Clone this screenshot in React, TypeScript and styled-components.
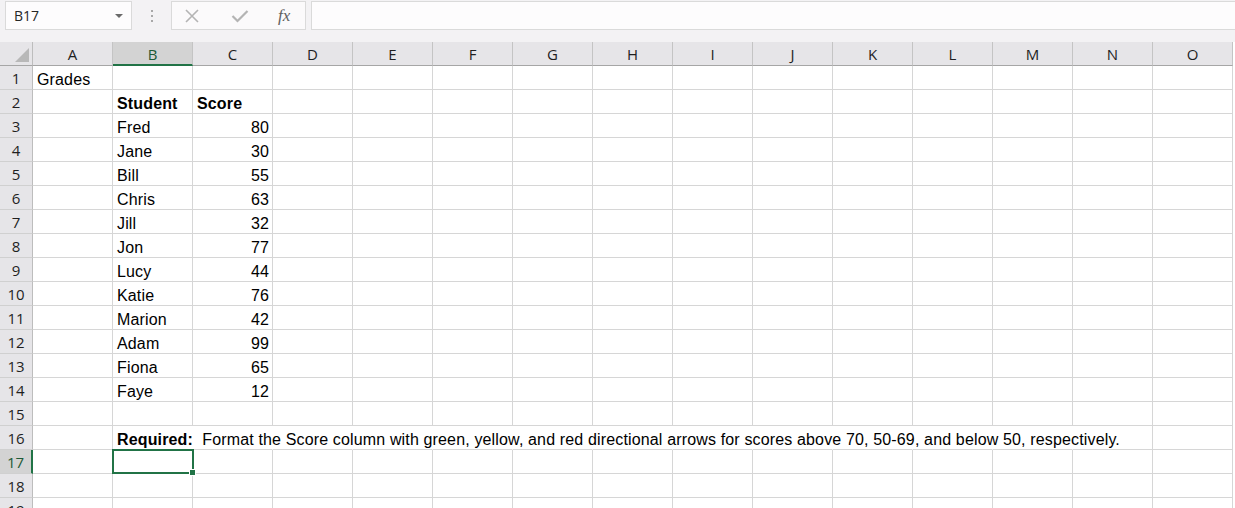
import styled, { createGlobalStyle } from 'styled-components';

const COLUMNS = ['A', 'B', 'C', 'D', 'E', 'F', 'G', 'H', 'I', 'J', 'K', 'L', 'M', 'N', 'O'];
const ROW_COUNT = 19;
const SELECTED_COL = 'B';
const SELECTED_ROW = 17;

const students: [string, number][] = [
  ['Fred', 80],
  ['Jane', 30],
  ['Bill', 55],
  ['Chris', 63],
  ['Jill', 32],
  ['Jon', 77],
  ['Lucy', 44],
  ['Katie', 76],
  ['Marion', 42],
  ['Adam', 99],
  ['Fiona', 65],
  ['Faye', 12],
];

type CellValue = { text: string; bold?: boolean; number?: boolean };

function cellAt(row: number, col: string): CellValue | null {
  if (row === 1 && col === 'A') return { text: 'Grades' };
  if (row === 2 && col === 'B') return { text: 'Student', bold: true };
  if (row === 2 && col === 'C') return { text: 'Score', bold: true };
  const s = students[row - 3];
  if (s && col === 'B') return { text: s[0] };
  if (s && col === 'C') return { text: String(s[1]), number: true };
  return null;
}

export default function App() {
  return (
    <>
      <GlobalStyle />
      <Toolbar>
        <NameBox>
          <span>B17</span>
          <Caret />
        </NameBox>
        <Grip>
          <i />
          <i />
          <i />
        </Grip>
        <ButtonBox>
          <IconSlot>
            <svg width="14" height="14" viewBox="0 0 14 14">
              <path d="M1 1 L13 13 M13 1 L1 13" stroke="#b4b4b4" strokeWidth="1.6" fill="none" />
            </svg>
          </IconSlot>
          <IconSlot>
            <svg width="18" height="14" viewBox="0 0 18 14">
              <path d="M1.5 7 L6.5 12 L16.5 2" stroke="#b4b4b4" strokeWidth="2.2" fill="none" />
            </svg>
          </IconSlot>
          <Fx>fx</Fx>
        </ButtonBox>
        <FormulaBox />
      </Toolbar>

      <Sheet>
        <Corner>
          <svg width="14" height="14" viewBox="0 0 14 14">
            <path d="M14 0 L14 14 L0 14 Z" fill="#b8b8b8" />
          </svg>
        </Corner>
        {COLUMNS.map((c) => (
          <ColHeader key={c} $selected={c === SELECTED_COL}>
            {c}
          </ColHeader>
        ))}

        {Array.from({ length: ROW_COUNT }, (_, i) => i + 1).map((r) => (
          <Row key={r} r={r} />
        ))}
      </Sheet>
    </>
  );
}

function Row({ r }: { r: number }) {
  return (
    <>
      <RowHeader $selected={r === SELECTED_ROW}>{r}</RowHeader>
      {COLUMNS.map((c, ci) => {
        if (r === 16) {
          // the note spills across C..N, so those cells lose their right gridline
          if (c === 'B')
            return (
              <Cell key={c} $spill $noRight>
                <Note>
                  <b>Required:</b>
                  {'  Format the Score column with green, yellow, and red directional arrows for scores above 70, 50-69, and below 50, respectively.'}
                </Note>
              </Cell>
            );
          return <Cell key={c} $noRight={ci >= 1 && ci < 13} />;
        }
        const v = cellAt(r, c);
        const active = r === SELECTED_ROW && c === SELECTED_COL;
        return (
          <Cell key={c} $number={v?.number} $bold={v?.bold} $spill={active}>
            {v?.text}
            {active && (
              <ActiveFrame>
                <Handle />
              </ActiveFrame>
            )}
          </Cell>
        );
      })}
    </>
  );
}

// Styled-components

const GlobalStyle = createGlobalStyle`
  html, body {
    margin: 0;
    padding: 0;
    background: #ffffff;
    overflow: hidden;
  }
  body {
    font-family: "Liberation Sans", Arial, sans-serif;
    color: #000;
  }
`;

const Toolbar = styled.div`
  display: flex;
  align-items: flex-start;
  height: 42px;
  padding: 1px 0 0 5px;
  box-sizing: border-box;
  background: #f3f2f4;
`;

const NameBox = styled.div`
  width: 127px;
  height: 29px;
  box-sizing: border-box;
  border: 1px solid #dadada;
  background: #fdfcfd;
  display: flex;
  align-items: center;
  justify-content: space-between;
  padding: 0 8px 0 8px;
  font-family: "Open Sans", "Liberation Sans", sans-serif;
  font-size: 14px;
  color: #262626;
`;

const Caret = styled.span`
  width: 0;
  height: 0;
  border-left: 4px solid transparent;
  border-right: 4px solid transparent;
  border-top: 4px solid #6a6a6a;
`;

const Grip = styled.div`
  width: 39px;
  height: 29px;
  display: flex;
  flex-direction: column;
  align-items: center;
  justify-content: center;
  gap: 3px;

  i {
    width: 2px;
    height: 2px;
    background: #a8a8a8;
  }
`;

const ButtonBox = styled.div`
  width: 135px;
  height: 29px;
  box-sizing: border-box;
  border: 1px solid #dadada;
  background: #fbfafb;
  display: flex;
  align-items: center;
  padding: 0 6px 0 13px;
  margin-right: 5px;
`;

const IconSlot = styled.span`
  width: 45px;
  display: flex;
  align-items: center;
  justify-content: flex-start;
  &:nth-child(2) {
    padding-left: 1px;
  }
`;

const Fx = styled.span`
  font-family: "Liberation Serif", "Times New Roman", serif;
  font-style: italic;
  font-size: 17px;
  color: #606060;
  margin-left: 2px;
`;

const FormulaBox = styled.div`
  flex: 1;
  height: 29px;
  box-sizing: border-box;
  border: 1px solid #dadada;
  border-right: none;
  background: #fdfcfd;
`;

const Sheet = styled.div`
  display: grid;
  grid-template-columns: 33px repeat(15, 80px);
  grid-template-rows: 24px;
  grid-auto-rows: 24px;
  width: 1233px;
`;

const headerBase = `
  box-sizing: border-box;
  background: #e6e5e8;
  font-family: "Open Sans", "Liberation Sans", sans-serif;
  font-size: 15px;
  color: #1f1f1f;
  display: flex;
  align-items: center;
  justify-content: center;
`;

const Corner = styled.div`
  ${headerBase}
  border-right: 1px solid #bdbdbd;
  border-bottom: 1px solid #a6a6a6;
  align-items: flex-end;
  justify-content: flex-end;
  padding: 0 3px 3px 0;
`;

const ColHeader = styled.div<{ $selected?: boolean }>`
  ${headerBase}
  border-right: 1px solid #c4c4c4;
  border-bottom: ${(p) => (p.$selected ? '2px solid #217346' : '1px solid #a6a6a6')};
  background: ${(p) => (p.$selected ? '#d3d3d3' : '#e6e5e8')};
  color: ${(p) => (p.$selected ? '#1d5a36' : '#1f1f1f')};
  padding-top: 1px;
`;

const RowHeader = styled.div<{ $selected?: boolean }>`
  ${headerBase}
  border-bottom: 1px solid #d0d0d0;
  border-right: ${(p) => (p.$selected ? '2px solid #217346' : '1px solid #bdbdbd')};
  background: ${(p) => (p.$selected ? '#d3d3d3' : '#e6e5e8')};
  color: ${(p) => (p.$selected ? '#1d5a36' : '#1f1f1f')};
`;

const Cell = styled.div<{ $number?: boolean; $bold?: boolean; $noRight?: boolean; $spill?: boolean }>`
  position: relative;
  box-sizing: border-box;
  border-right: 1px solid ${(p) => (p.$noRight ? '#ffffff' : '#d6d6d6')};
  border-bottom: 1px solid #d6d6d6;
  padding: 3px 3px 0 4px;
  font-size: 16px;
  letter-spacing: 0.15px;
  line-height: 21px;
  font-weight: ${(p) => (p.$bold ? 700 : 400)};
  text-align: ${(p) => (p.$number ? 'right' : 'left')};
  white-space: nowrap;
  overflow: ${(p) => (p.$spill ? 'visible' : 'hidden')};
  z-index: ${(p) => (p.$spill ? 2 : 'auto')};
  background: ${(p) => (p.$spill ? 'transparent' : '#ffffff')};
`;

const Note = styled.span`
  white-space: pre;
`;

const ActiveFrame = styled.div`
  position: absolute;
  left: -1px;
  top: -1px;
  right: -2px;
  bottom: -1px;
  border: 2px solid #217346;
  z-index: 3;
`;

const Handle = styled.div`
  position: absolute;
  right: -4px;
  bottom: -4px;
  width: 5px;
  height: 5px;
  background: #217346;
  border: 1px solid #ffffff;
`;
